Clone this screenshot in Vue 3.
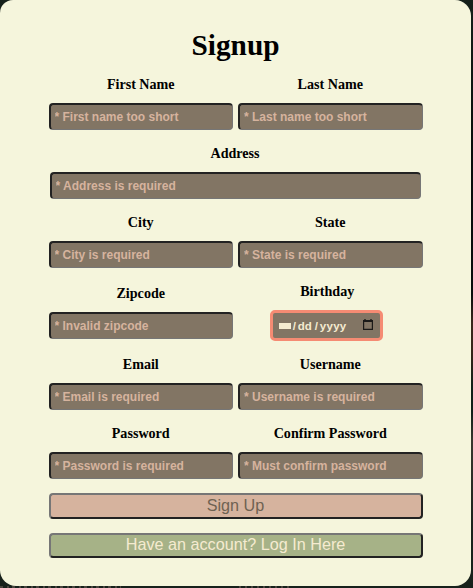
<script setup>
const rows = [
  [{ label: 'First Name', hint: '* First name too short' }, { label: 'Last Name', hint: '* Last name too short' }],
  [{ label: 'Address', hint: '* Address is required', wide: true }],
  [{ label: 'City', hint: '* City is required' }, { label: 'State', hint: '* State is required' }],
  [{ label: 'Zipcode', hint: '* Invalid zipcode' }, { label: 'Birthday', date: true }],
  [{ label: 'Email', hint: '* Email is required' }, { label: 'Username', hint: '* Username is required' }],
  [{ label: 'Password', hint: '* Password is required', type: 'password' }, { label: 'Confirm Password', hint: '* Must confirm password', type: 'password' }]
]
</script>

<template>
  <div class="page">
    <form class="card" @submit.prevent>
      <h1>Signup</h1>
      <div v-for="(row, i) in rows" :key="i" class="row">
        <label v-for="f in row" :key="f.label" class="field" :class="{ wide: f.wide }">
          <span class="label">{{ f.label }}</span>
          <span v-if="f.date" class="date">
            <span class="month">mm</span><span class="slash">/</span><span class="day">dd</span><span class="slash">/</span><span class="year">yyyy</span>
            <svg class="calendar" viewBox="0 0 10 11" width="10" height="11">
              <path d="M0.6 1.5H9.4V10.4H0.6Z" fill="none" stroke="#1b1a18" stroke-width="1.2" />
              <path d="M0.5 2.2H9.5M2 0V2M8 0V2" fill="none" stroke="#1b1a18" stroke-width="1.4" />
            </svg>
          </span>
          <input v-else :type="f.type || 'text'" :placeholder="f.hint" />
        </label>
      </div>
      <button class="signup" type="submit">Sign Up</button>
      <button class="login" type="button">Have an account? Log In Here</button>
    </form>
  </div>
</template>

<style>
body {
  background: #15201a;
}
</style>

<style scoped>
.page {
  height: 588px;
  overflow: hidden;
  background:
    repeating-linear-gradient(90deg, #4a453e 0 3px, transparent 3px 7px, #4a453e 7px 9px, transparent 9px 12px) 0 100% / 121px 2px no-repeat,
    repeating-linear-gradient(90deg, #4a453e 0 2px, transparent 2px 6px) 239px 100% / 50px 2px no-repeat,
    linear-gradient(180deg, #15201a 0%, #080e0b 25%, #080e0b 50%, #3a281c 55%, #352519 60%, #10201a 66%, #10201a 70%, #38372f 75%, #1a211c 90%, #17211b 100%);
}
.card {
  box-sizing: border-box;
  width: 470.5px;
  height: 586px;
  padding: 27px 48px 0 48.5px;
  display: flex;
  flex-direction: column;
  background: #f5f5dc;
  border-radius: 13px 16px 16px 16px;
  font-family: "Liberation Serif", serif;
  color: #000;
}
h1 {
  margin: 0 0 8px;
  height: 36px;
  line-height: 36px;
  font-size: 29.3px;
  font-weight: bold;
  text-align: center;
}
.row {
  display: flex;
  align-items: center;
  gap: 5px;
  margin-bottom: 10px;
}
.field {
  flex: 0 0 184.5px;
  display: flex;
  flex-direction: column;
  align-items: center;
  gap: 5px;
}
.field.wide {
  flex: 1;
  padding: 0 2px 0 1px;
}
.label {
  height: 27px;
  line-height: 27px;
  font-size: 14.1px;
  font-weight: bold;
  white-space: nowrap;
}
input {
  box-sizing: border-box;
  width: 100%;
  height: 27px;
  margin: 0;
  padding: 0 4px;
  border: 2px solid;
  border-width: 2px 1px 1px 2px;
  border-color: #222 #767676 #767676 #222;
  border-radius: 4px;
  background: #827564;
  color: #f5ebd0;
  font: bold 12px "Liberation Sans", sans-serif;
}
input::placeholder {
  color: #d6b39e;
  opacity: 1;
}
.field:has(.date) .label {
  margin-left: -6px;
}
.date {
  box-sizing: border-box;
  width: 113px;
  height: 31px;
  margin-right: 8px;
  padding: 0 7px 0 6px;
  display: flex;
  align-items: center;
  border: 3px solid #f58b73;
  border-radius: 5px;
  background: #827564;
  color: #f5ebd0;
  font: bold 11.5px "Liberation Sans", sans-serif;
}
.month {
  width: 12px;
  height: 6px;
  line-height: 6px;
  font-size: 6px;
  text-align: center;
  background: #f5ebd0;
}
.slash {
  width: 7px;
  text-align: center;
}
.day {
  width: 15px;
}
.year {
  letter-spacing: 0.3px;
}
.calendar {
  margin: -2px 0 0 auto;
}
button {
  box-sizing: border-box;
  height: 26px;
  width: 374px;
  padding: 0 0 2px;
  border: 2px solid;
  border-color: #767676 #222 #222 #767676;
  border-radius: 4px;
  font: 16.2px/20px "Liberation Sans", sans-serif;
}
.signup {
  margin-top: 4px;
  background: #d6b39e;
  color: #6f6252;
}
.login {
  margin-top: 14px;
  height: 25px;
  line-height: 19px;
  background: #a6b287;
  color: #f5ebd0;
}
</style>
